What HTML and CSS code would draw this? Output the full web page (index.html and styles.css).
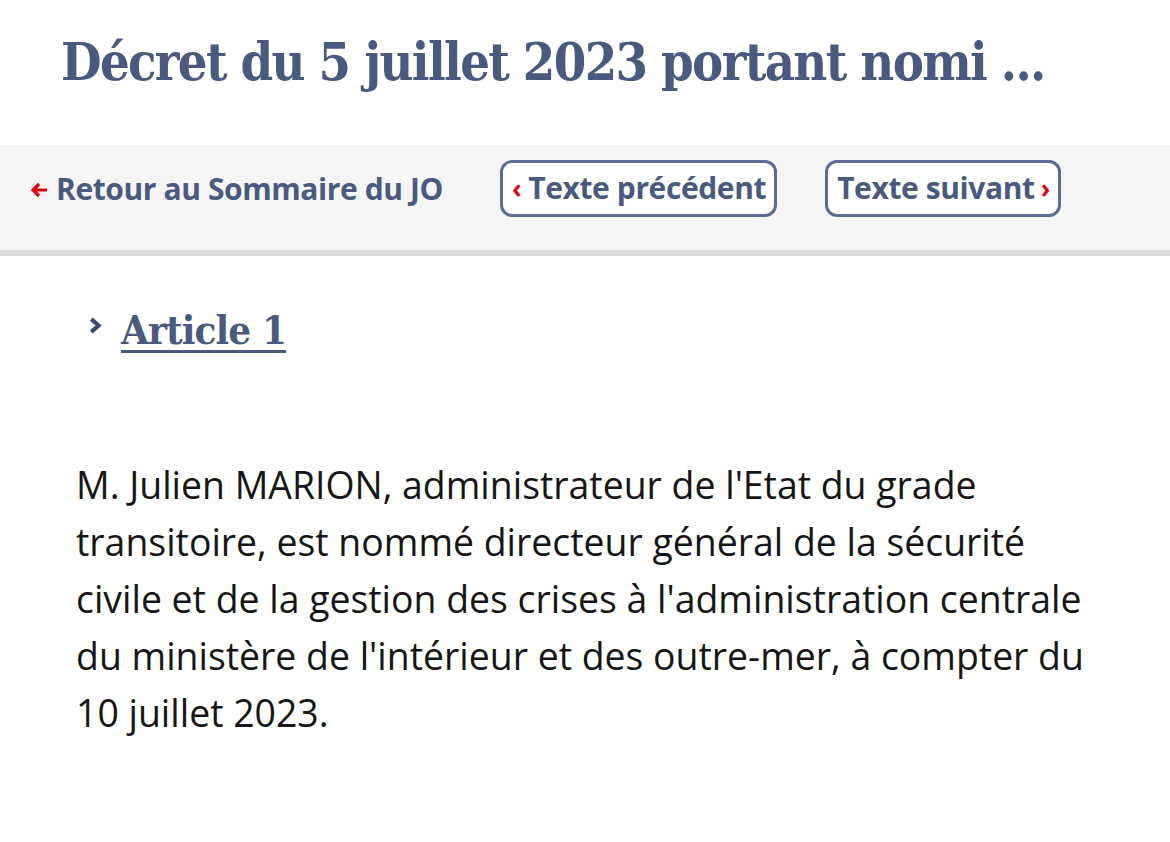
FILE: index.html
```html
<!DOCTYPE html>
<html lang="fr">
<head>
<meta charset="utf-8">
<title>Décret du 5 juillet 2023</title>
<link rel="stylesheet" href="styles.css">
</head>
<body>
<header class="page-head">
  <h1 class="title">Décret du 5 juillet 2023 portant nomi ...</h1>
</header>
<nav class="navbar">
  <a class="back" href="#"><svg class="arrow" viewBox="0 0 18 16" width="18" height="16"><path d="M17 8 H3 M9 2 L3 8 L9 14" fill="none" stroke="#e1000f" stroke-width="3.2"/></svg>Retour au Sommaire du JO</a>
  <a class="btn" href="#"><span class="red chev left">&#8249;</span>Texte précédent</a>
  <a class="btn" href="#">Texte suivant<span class="red chev right">&#8250;</span></a>
</nav>
<main class="content">
  <h2 class="article">
    <svg class="caret" viewBox="0 0 16 16" width="17" height="17"><path d="M4 2 L11 8 L4 14" fill="none" stroke="#3a4766" stroke-width="3.8"/></svg>
    <a href="#" class="article-link">Article 1</a>
  </h2>
  <p class="text">M. Julien MARION, administrateur de l'Etat du grade transitoire, est nommé directeur général de la sécurité civile et de la gestion des crises à l'administration centrale du ministère de l'intérieur et des outre-mer, à compter du 10 juillet 2023.</p>
</main>
</body>
</html>
```
FILE: styles.css
```css
* { box-sizing: border-box; }
html, body { margin: 0; padding: 0; background: #fff; }
body { font-family: "Open Sans", "Noto Sans", sans-serif; color: #161616; }

.page-head { height: 145px; padding: 22px 0 0 61px; }
.title {
  margin: 0;
  font-family: "DejaVu Serif Condensed", "DejaVu Serif", serif;
  font-stretch: condensed;
  font-weight: 700;
  font-size: 52px;
  letter-spacing: -1.65px;
  line-height: 80px;
  color: #4a5a7e;
  white-space: nowrap;
}

.navbar {
  display: flex;
  align-items: center;
  height: 111px;
  background: #f5f5f5;
  border-bottom: 6px solid #dcdcdc;
  padding: 0 0 18px 30px;
}
.navbar a { text-decoration: none; color: #4a5a7e; font-weight: 700; font-size: 30px; letter-spacing: -0.4px; }
.back { margin-right: 57px; display: flex; align-items: center; }
.red { color: #e1000f; }
.arrow { margin-right: 8px; margin-top: 2px; }
.btn {
  display: flex; align-items: center;
  height: 57px;
  padding: 0 8px 2px 9px;
  border: 3px solid #5d6c92;
  border-radius: 12px;
  background: #fff;
  margin-right: 48px;
}
.chev { font-size: 26px; }
.chev.left { margin-right: 7px; }
.chev.right { margin-left: 6px; }

.content { padding: 50px 76px 0 76px; }
.article {
  margin: 0;
  display: flex; align-items: center;
  padding-left: 11px;
  font-family: "DejaVu Serif Condensed", "DejaVu Serif", serif;
  font-stretch: condensed;
  font-size: 40px;
  letter-spacing: -0.9px;
  font-weight: 700;
}
.caret { margin-right: 17px; margin-top: -8px; }
.article-link { color: #4a5a7e; text-decoration: underline; text-decoration-thickness: 3px; text-underline-offset: 6px; }

.text {
  margin: 103px 0 0 0;
  width: 1030px;
  font-size: 37.4px;
  line-height: 57px;
  color: #161616;
}
```
